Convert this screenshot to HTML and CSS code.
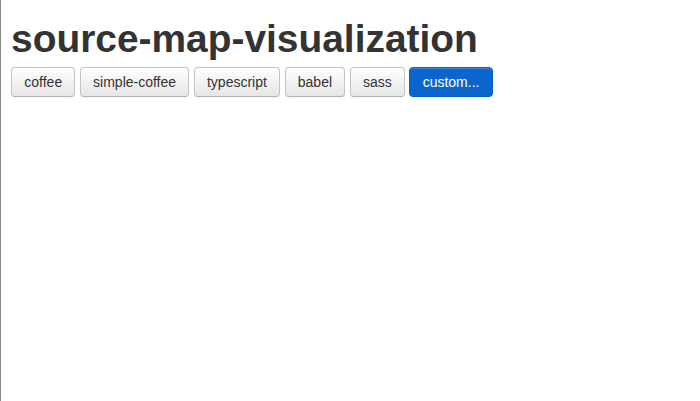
FILE: index.html
```html
<!DOCTYPE html>
<html>
<head>
<meta charset="utf-8">
<link rel="stylesheet" href="styles.css">
</head>
<body>
<div class="page">
  <h1 class="title">source-map-visualization</h1>
  <div class="toolbar">
    <button class="btn">coffee</button>
    <button class="btn">simple-coffee</button>
    <button class="btn">typescript</button>
    <button class="btn">babel</button>
    <button class="btn">sass</button>
    <button class="btn btn-primary">custom...</button>
  </div>
</div>
</body>
</html>
```
FILE: styles.css
```css
html, body {
  margin: 0;
  padding: 0;
  height: 100%;
  background: #fff;
}
body {
  border-left: 1px solid #8a8a8a;
  box-sizing: border-box;
  font-family: "Liberation Sans", Arial, sans-serif;
  color: #333;
}
.page {
  padding: 0 10px;
}
.title {
  margin: 0;
  padding-top: 19px;
  font-size: 38.9px;
  line-height: 40px;
  font-weight: bold;
  color: #333;
}
.toolbar {
  margin-top: 8px;
  display: flex;
  gap: 4.3px;
}
.btn {
  font-family: "Liberation Sans", Arial, sans-serif;
  font-size: 14px;
  line-height: 20px;
  padding: 4px 12.3px;
  color: #333;
  background: linear-gradient(#ffffff, #e6e6e6);
  border: 1px solid #c5c5c5;
  border-bottom-color: #b3b3b3;
  border-radius: 4px;
  box-shadow: inset 0 1px 0 rgba(255,255,255,.2), 0 1px 2px rgba(0,0,0,.05);
  cursor: pointer;
}
.btn-primary {
  color: #fff;
  background: #0a66cc;
  border-color: #0a5fc4;
}
```
